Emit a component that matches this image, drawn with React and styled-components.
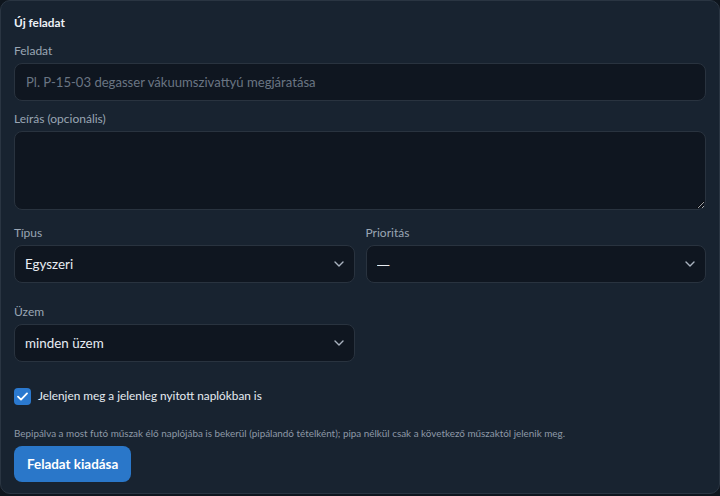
import React from "react";
import styled, { createGlobalStyle } from "styled-components";

const GlobalStyle = createGlobalStyle`
  html, body {
    margin: 0;
    padding: 0;
    background: #0e151d;
    color-scheme: dark;
  }
  body {
    font-family: Lato, "Noto Sans", sans-serif;
  }
  * { box-sizing: border-box; }
`;

const Card = styled.form`
  width: 720px;
  background: #182330;
  border: 1px solid #2a3542;
  border-radius: 10px;
  padding: 13px 13px 11px;
  display: flex;
  flex-direction: column;
`;

const Title = styled.h2`
  margin: 0;
  font-size: 11.8px;
  line-height: 17px;
  font-weight: 700;
  color: #eef2f7;
`;

const Field = styled.div`
  display: flex;
  flex-direction: column;
  margin-top: ${(p) => p.$top || 0}px;
  min-width: 0;
`;

const Label = styled.label`
  font-size: 12px;
  line-height: 18px;
  color: #9aa6b4;
  margin-bottom: 3px;
`;

const TextInput = styled.input`
  height: 38px;
  width: 100%;
  background: #0f1620;
  border: 1px solid #29333f;
  border-radius: 8px;
  padding: 0 11px;
  font: inherit;
  font-size: 13.1px;
  color: #e6ebf1;
  outline: none;
  &::placeholder {
    color: #6a7583;
  }
`;

const TextArea = styled.textarea`
  display: block;
  height: 79px;
  width: 100%;
  background: #0f1620;
  border: 1px solid #29333f;
  border-radius: 8px;
  padding: 8px 11px;
  font: inherit;
  font-size: 13.1px;
  color: #e6ebf1;
  outline: none;
  resize: vertical;
`;

const Row = styled.div`
  display: grid;
  grid-template-columns: 1fr 1fr;
  column-gap: 11px;
  margin-top: ${(p) => p.$top || 0}px;
`;

const SelectWrap = styled.div`
  position: relative;
`;

const Select = styled.select`
  appearance: none;
  width: 100%;
  height: 38px;
  background: #0f1620;
  border: 1px solid #29333f;
  border-radius: 8px;
  padding: 0 30px 0 10px;
  font: inherit;
  font-family: ${(p) => (p.$plain ? '"Noto Sans", sans-serif' : "inherit")};
  font-size: 13.4px;
  color: #e8edf3;
  outline: none;
`;

const Chevron = styled.svg`
  position: absolute;
  right: 11px;
  top: 50%;
  transform: translateY(-50%);
  pointer-events: none;
`;

const CheckRow = styled.label`
  display: flex;
  align-items: center;
  gap: 7px;
  margin-top: 25px;
  font-size: 11.8px;
  line-height: 18px;
  color: #e6ecf2;
`;

const CheckBox = styled.span`
  width: 17px;
  height: 17px;
  border-radius: 4px;
  background: #2b79cf;
  display: flex;
  align-items: center;
  justify-content: center;
  flex: none;
`;

const Hint = styled.p`
  margin: 21px 0 0;
  font-size: 9.9px;
  line-height: 14px;
  color: #8e99a7;
`;

const Button = styled.button`
  align-self: flex-start;
  margin-top: 6px;
  height: 36px;
  padding: 0 13px;
  border: none;
  border-radius: 8px;
  background: #2a77c9;
  color: #ffffff;
  font: inherit;
  font-size: 13.4px;
  font-weight: 700;
`;

function Dropdown({ value, options, plain }) {
  return (
    <SelectWrap>
      <Select defaultValue={value} $plain={plain}>
        {options.map((o) => (
          <option key={o}>{o}</option>
        ))}
      </Select>
      <Chevron width="10" height="6" viewBox="0 0 10 6" fill="none">
        <path d="M1 1l4 4 4-4" stroke="#aab3bf" strokeWidth="1.4" strokeLinecap="round" strokeLinejoin="round" />
      </Chevron>
    </SelectWrap>
  );
}

export default function App() {
  return (
    <>
      <GlobalStyle />
      <Card onSubmit={(e) => e.preventDefault()}>
        <Title>Új feladat</Title>
        <Field $top={11}>
          <Label>Feladat</Label>
          <TextInput placeholder="Pl. P-15-03 degasser vákuumszivattyú megjáratása" />
        </Field>
        <Field $top={9}>
          <Label>Leírás (opcionális)</Label>
          <TextArea />
        </Field>
        <Row $top={14}>
          <Field>
            <Label>Típus</Label>
            <Dropdown value="Egyszeri" options={["Egyszeri", "Ismétlődő"]} />
          </Field>
          <Field>
            <Label>Prioritás</Label>
            <Dropdown plain value="—" options={["—", "Alacsony", "Közepes", "Magas"]} />
          </Field>
        </Row>
        <Row $top={20}>
          <Field>
            <Label>Üzem</Label>
            <Dropdown value="minden üzem" options={["minden üzem"]} />
          </Field>
        </Row>
        <CheckRow>
          <CheckBox>
            <svg width="11" height="9" viewBox="0 0 11 9" fill="none">
              <path d="M1 4.6l3 3L10 1.4" stroke="#fff" strokeWidth="1.8" strokeLinecap="round" strokeLinejoin="round" />
            </svg>
          </CheckBox>
          Jelenjen meg a jelenleg nyitott naplókban is
        </CheckRow>
        <Hint>
          Bepipálva a most futó műszak élő naplójába is bekerül (pipálandó tételként); pipa nélkül csak a következő műszaktól jelenik meg.
        </Hint>
        <Button type="submit">Feladat kiadása</Button>
      </Card>
    </>
  );
}
